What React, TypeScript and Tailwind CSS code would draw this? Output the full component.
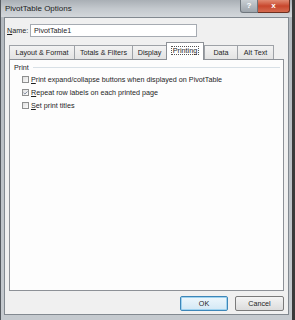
import { Check } from 'lucide-react'

const tabs = [
  { label: 'Layout & Format', w: 'w-[65px]' },
  { label: 'Totals & Filters', w: 'w-[58px]' },
  { label: 'Display', w: 'w-[34px]' },
  { label: 'Printing', w: 'w-[38px]', active: true },
  { label: 'Data', w: 'w-[33px]' },
  { label: 'Alt Text', w: 'w-[37px]' },
]

function CheckRow({ k, rest, checked }: { k: string; rest: string; checked?: boolean }) {
  return (
    <div className="flex h-[13px] items-center gap-[2px]">
      <div className="flex h-[7px] w-[7px] items-center justify-center border border-[#8e8f8f] bg-gradient-to-br from-[#e0e0e0] to-[#fbfbfb]">
        {checked && <Check size={8} strokeWidth={3} className="text-[#3a4a6a]" />}
      </div>
      <span>
        <span className="underline">{k}</span>
        {rest}
      </span>
    </div>
  )
}

export default function App() {
  return (
    <div
      className="flex h-[320px] w-[295px] flex-col border-l border-[#555a60] border-r-[3px] border-r-[#3a3a3a] bg-gradient-to-b from-[#b2b8be] to-[#c5cacf] text-[7.2px] leading-none text-[#1e1e1e]"
      style={{ fontFamily: '"Liberation Sans", Arial, sans-serif' }}
    >
      {/* Title bar */}
      <div className="flex h-[17px] shrink-0 items-start bg-gradient-to-b from-[#a9afb5] via-[#c3c8cd] to-[#d3d7db]">
        <span className="mt-[5px] ml-[4px] text-[8px] text-[#1c1c1c]">PivotTable Options</span>
        <div className="ml-auto mr-[2px] flex">
          <div className="flex h-[13px] w-[18px] items-center justify-center rounded-bl-[3px] border border-t-0 border-[#6f767d] bg-gradient-to-b from-[#c9ced3] to-[#9ea5ac] text-[8px] font-bold text-white">
            ?
          </div>
          <div className="flex h-[13px] w-[32px] items-center justify-center rounded-br-[3px] border border-t-0 border-l-0 border-[#6e3020] bg-gradient-to-b from-[#e08a72] via-[#c8462c] to-[#d46a4f] text-[8px] font-bold text-white">
            x
          </div>
        </div>
      </div>

      {/* Client area */}
      <div className="mx-[3px] mb-[5px] flex flex-1 flex-col border border-[#828990] bg-[#f0f0f0]">
        <div className="mt-[6px] flex items-center pl-[2px]">
          <span className="w-[23px]">
            <span className="underline">N</span>ame:
          </span>
          <div className="flex h-[13px] w-[167px] items-center border border-[#a6abb2] bg-white px-[3px]">
            PivotTable1
          </div>
        </div>

        <div className="mt-[3px] flex h-[19px] items-end pl-[4px]">
          {tabs.map((t) =>
            t.active ? (
              <div
                key={t.label}
                className={`${t.w} relative z-10 -mb-px flex h-[18px] items-start justify-center border border-b-0 border-[#8d9197] bg-white pt-[3px]`}
              >
                <span className="border border-dotted border-[#555] px-[1px]">{t.label}</span>
              </div>
            ) : (
              <div
                key={t.label}
                className={`${t.w} flex h-[14px] items-center justify-center border border-b-0 border-r-0 border-[#9ea2a7] bg-gradient-to-b from-[#f3f3f3] to-[#e3e3e3] last:border-r`}
              >
                {t.label}
              </div>
            )
          )}
        </div>

        <div className="mx-[4px] flex h-[232px] flex-col border border-[#8d9197] bg-[#fdfdfd] pl-[4px] pr-[3px] pt-[4px]">
          <div className="flex items-center gap-[4px]">
            <span>Print</span>
            <div className="h-px flex-1 bg-[#d8e0e6]" />
          </div>
          <div className="mt-[2px] flex flex-col pl-[8px]">
            <CheckRow k="P" rest="rint expand/collapse buttons when displayed on PivotTable" />
            <CheckRow k="R" rest="epeat row labels on each printed page" checked />
            <CheckRow k="S" rest="et print titles" />
          </div>
        </div>

        <div className="mt-[5px] flex justify-end gap-[7px] pr-[4px]">
          <div className="flex h-[15px] w-[48px] items-center justify-center rounded-[2px] border border-[#3d86b8] bg-gradient-to-b from-[#eef7fc] to-[#d3e8f5] shadow-[inset_0_0_0_1px_#9fd3f0]">
            OK
          </div>
          <div className="flex h-[15px] w-[49px] items-center justify-center rounded-[2px] border border-[#7a7a7a] bg-gradient-to-b from-[#f4f4f4] to-[#dcdcdc]">
            Cancel
          </div>
        </div>
      </div>
    </div>
  )
}
